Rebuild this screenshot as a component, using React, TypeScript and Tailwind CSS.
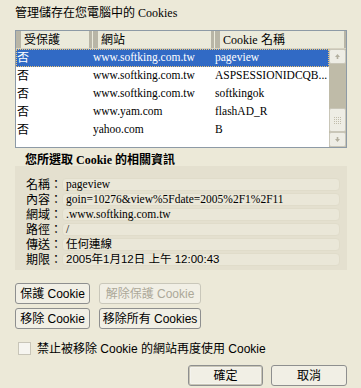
const serif = "font-['Liberation_Serif','Noto_Sans_CJK_TC',serif]";
const sans = "font-['Liberation_Sans','Noto_Sans_CJK_TC',sans-serif]";

const rows = [
  { p: "否", site: "www.softking.com.tw", name: "pageview" },
  { p: "否", site: "www.softking.com.tw", name: "ASPSESSIONIDCQB..." },
  { p: "否", site: "www.softking.com.tw", name: "softkingok" },
  { p: "否", site: "www.yam.com", name: "flashAD_R" },
  { p: "否", site: "yahoo.com", name: "B" },
];

const details = [
  { label: "名稱：", value: "pageview", cls: serif },
  { label: "內容：", value: "goin=10276&view%5Fdate=2005%2F1%2F11", cls: serif },
  { label: "網域：", value: ".www.softking.com.tw", cls: serif },
  { label: "路徑：", value: "/", cls: serif },
  { label: "傳送：", value: "任何連線", cls: sans },
  { label: "期限：", value: "2005年1月12日 上午 12:00:43", cls: sans },
];

function Btn({ children, w, disabled, def }: { children: React.ReactNode; w: string; disabled?: boolean; def?: boolean }) {
  return (
    <div
      className={`${w} h-[21px] rounded-[3px] border flex items-center justify-center text-[12px] ${sans} ${
        disabled ? "border-[#C9C7BA] text-[#ACA899]" : "border-[#8E8F8F] text-black"
      } ${def ? "shadow-[inset_0_0_0_1px_#C8C5B6,inset_0_0_0_2px_#F4F3EE]" : ""} bg-[#F1EFE5]`}
    >
      {children}
    </div>
  );
}

export default function App() {
  return (
    <div className={`w-[361px] h-[388px] bg-[#ECE9D8] overflow-hidden text-black ${sans}`}>
      <div className={`pt-[5px] pl-[15px] h-[30px] text-[12px] leading-[16px] ${serif}`}>管理儲存在您電腦中的 Cookies</div>

      {/* list view */}
      <div className="ml-[15px] w-[332px] h-[118px] border border-[#8D9AA6] bg-white flex flex-col">
        <div className="h-[18px] flex bg-[#EBEADB] border-b border-[#D6D2C2] text-[12px]">
          <div className="w-[76px] flex items-center border-l-[5px] border-r-[3px] border-[#B8B5A6] pl-[3px]">受保護</div>
          <div className="w-[121px] ml-[1px] flex items-center border-l-[5px] border-r-[3px] border-[#B8B5A6] pl-[3px]">網站</div>
          <div className={`flex-1 ml-[1px] flex items-center border-l-[5px] border-r-[2px] border-[#B8B5A6] pl-[3px] ${serif}`}>
            Cookie <span className={sans}>&nbsp;名稱</span>
          </div>
        </div>
        <div className="flex flex-1 min-h-0">
          <div className={`flex-1 text-[11.5px] ${serif}`}>
            {rows.map((r, i) => (
              <div
                key={i}
                className={`h-[18px] flex items-center ${
                  i === 0 ? "bg-[#316AC5] text-white outline outline-1 outline-dotted outline-[#F0C674] -outline-offset-1" : ""
                }`}
              >
                <div className={`w-[77px] pl-[1px] text-[12px] ${sans}`}>{r.p}</div>
                <div className="w-[121px] whitespace-nowrap">{r.site}</div>
                <div className="flex-1 pl-[1px] whitespace-nowrap">{r.name}</div>
              </div>
            ))}
          </div>
          {/* scrollbar */}
          <div className="w-[17px] flex flex-col bg-[#BFBBA8]">
            <div className="h-[15px] bg-[#EEEDE5] border border-[#C9C6B8] rounded-[2px] flex items-center justify-center">
              <svg width="7" height="7" viewBox="0 0 7 7"><path d="M3.5 1 L6 4 H4.3 V6 H2.7 V4 H1 Z" fill="#B3AF9F" /></svg>
            </div>
            <div className="flex-1" />
            <div className="h-[24px] bg-[#EEEDE5] border border-[#C9C6B8] rounded-[2px] flex items-center justify-center">
              <div className="grid grid-cols-4 gap-[1px]">
                {Array.from({ length: 16 }).map((_, i) => (
                  <div key={i} className="w-[1px] h-[1px] bg-[#C1BDAC]" />
                ))}
              </div>
            </div>
            <div className="h-[15px] bg-[#EEEDE5] border border-[#C9C6B8] rounded-[2px] flex items-center justify-center">
              <svg width="7" height="7" viewBox="0 0 7 7"><path d="M3.5 6 L6 3 H4.3 V1 H2.7 V3 H1 Z" fill="#B3AF9F" /></svg>
            </div>
          </div>
        </div>
      </div>

      {/* details */}
      <div className={`relative z-10 mt-[5px] pl-[25px] h-[15px] text-[12px] leading-[15px] font-bold ${serif}`}>
        您所選取 Cookie 的相關資訊
      </div>
      <div className="ml-[15px] -mt-[2px] w-[332px] h-[104px] bg-[#E4E0CF] pt-[12px] flex flex-col gap-[2px]">
        {details.map((d) => (
          <div key={d.label} className="h-[13px] flex items-center">
            <div className="w-[47px] pl-[11px] text-[12px] whitespace-nowrap">{d.label}</div>
            <div className={`w-[278px] h-[13px] rounded-[4px] bg-[#EAE7D8] border border-[#E0DCCA] flex items-center pl-[3px] text-[11.5px] whitespace-nowrap ${d.cls}`}>
              {d.value}
            </div>
          </div>
        ))}
      </div>

      {/* buttons */}
      <div className="ml-[15px] mt-[13px] flex flex-col gap-[4px]">
        <div className="flex gap-[9px]">
          <Btn w="w-[75px]">保護 Cookie</Btn>
          <Btn w="w-[102px]" disabled>解除保護 Cookie</Btn>
        </div>
        <div className="flex gap-[9px]">
          <Btn w="w-[75px]">移除 Cookie</Btn>
          <Btn w="w-[102px]">移除所有 Cookies</Btn>
        </div>
      </div>

      <div className="ml-[18px] mt-[13px] flex items-center h-[13px]">
        <div className="w-[13px] h-[13px] border border-[#C8C5B8] bg-[#F6F5F0]" />
        <div className="ml-[6px] text-[12px] whitespace-nowrap">禁止被移除 Cookie 的網站再度使用 Cookie</div>
      </div>

      <div className="mt-[10px] ml-[188px] flex gap-[8px]">
        <Btn w="w-[75px]" def>確定</Btn>
        <Btn w="w-[76px]">取消</Btn>
      </div>
    </div>
  );
}
